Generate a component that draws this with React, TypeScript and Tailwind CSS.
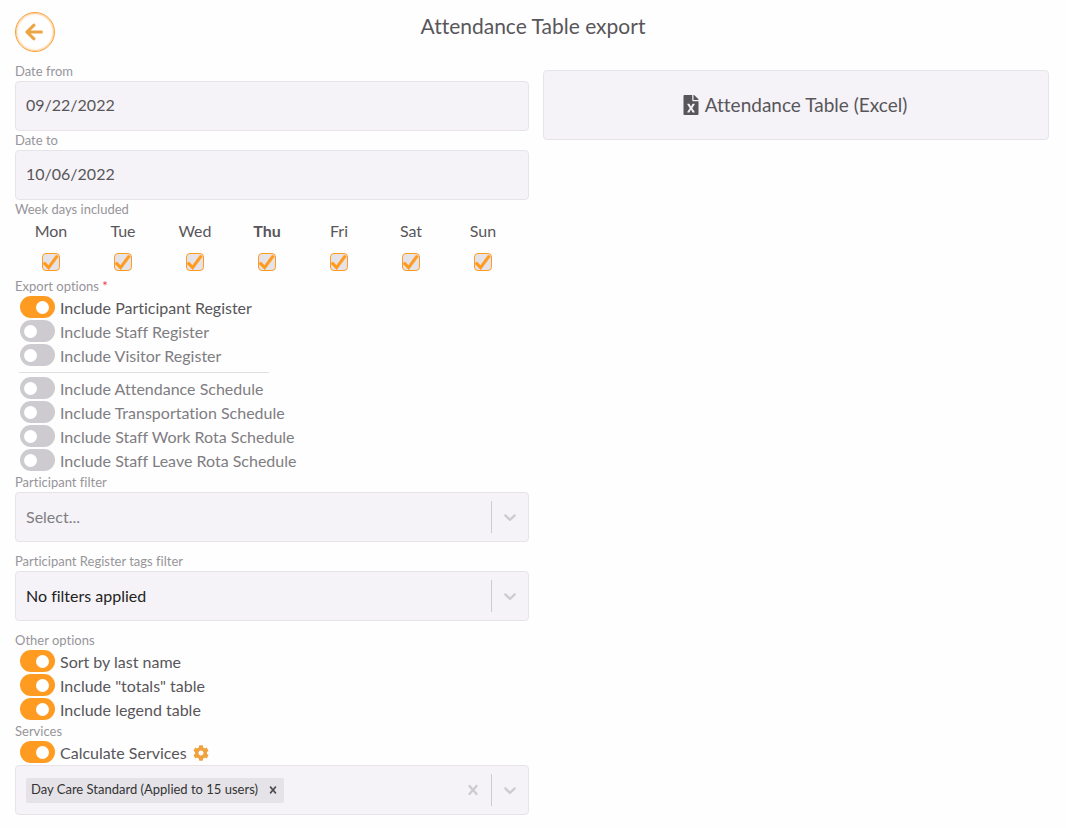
import React, { useState } from 'react';
import { FaArrowLeft, FaCog, FaFileExcel } from 'react-icons/fa';

const DAYS = ['Mon', 'Tue', 'Wed', 'Thu', 'Fri', 'Sat', 'Sun'];
const TODAY = 'Thu';

const REGISTERS = ['Include Participant Register', 'Include Staff Register', 'Include Visitor Register'];
const SCHEDULES = [
  'Include Attendance Schedule',
  'Include Transportation Schedule',
  'Include Staff Work Rota Schedule',
  'Include Staff Leave Rota Schedule',
];
const OTHER = ['Sort by last name', 'Include "totals" table', 'Include legend table'];

const labelClass = "block h-[19px] text-[13px] leading-[18px] text-[#97959a]";
const boxClass = "w-full h-[50px] bg-[#f5f3f7] border border-[#e6e4e8] rounded";

const ChevronDown = () => (
  <svg width="20" height="20" viewBox="0 0 20 20" fill="currentColor" aria-hidden="true">
    <path d="M4.516 7.548c0.436-0.446 1.043-0.481 1.576 0l3.908 3.747 3.908-3.747c0.533-0.481 1.141-0.446 1.574 0 0.436 0.445 0.408 1.197 0 1.615-0.406 0.418-4.695 4.502-4.695 4.502-0.217 0.223-0.502 0.335-0.787 0.335s-0.57-0.112-0.789-0.335c0 0-4.287-4.084-4.695-4.502s-0.436-1.17 0-1.615z" />
  </svg>
);

const Cross = ({ size }: { size: number }) => (
  <svg width={size} height={size} viewBox="0 0 20 20" fill="currentColor" aria-hidden="true">
    <path d="M14.348 14.849c-0.469 0.469-1.229 0.469-1.697 0l-2.651-3.030-2.651 3.029c-0.469 0.469-1.229 0.469-1.697 0-0.469-0.469-0.469-1.229 0-1.697l2.758-3.15-2.759-3.152c-0.469-0.469-0.469-1.228 0-1.697s1.228-0.469 1.697 0l2.652 3.031 2.651-3.031c0.469-0.469 1.228-0.469 1.697 0s0.469 1.229 0 1.697l-2.758 3.152 2.758 3.15c0.469 0.469 0.469 1.229 0 1.698z" />
  </svg>
);

interface DateFieldProps {
  id: string;
  label: string;
  initial: string;
}

const DateField: React.FC<DateFieldProps> = ({ id, label, initial }) => {
  const [value, setValue] = useState(initial);

  return (
    <div>
      <label htmlFor={id} className={labelClass}>{label}</label>
      <input
        id={id}
        type="text"
        value={value}
        onChange={(e) => setValue(e.target.value)}
        className={`${boxClass} block px-[10px] pb-1 text-base text-[#58565a] outline-none`}
      />
    </div>
  );
};

interface ToggleProps {
  label: string;
  initial?: boolean;
  children?: React.ReactNode;
}

const Toggle: React.FC<ToggleProps> = ({ label, initial = false, children }) => {
  const [on, setOn] = useState(initial);

  return (
    <div className="flex h-6 items-start pl-[5px]">
      <label className="flex items-start gap-[5px]">
        <input
          type="checkbox"
          role="switch"
          checked={on}
          onChange={(e) => setOn(e.target.checked)}
          className="flex h-[22px] w-[35px] shrink-0 appearance-none items-center rounded-full bg-[#cdcbcf] px-1 before:block before:size-[13px] before:rounded-full before:bg-white checked:justify-end checked:bg-[#ff9b21] checked:px-[6px]"
        />
        <span className={`text-base leading-6 whitespace-nowrap ${on ? 'text-[#58565a]' : 'text-[#7f7d82]'}`}>{label}</span>
      </label>
      {children}
    </div>
  );
};

interface SelectFieldProps {
  id: string;
  label: string;
  option: string;
  textClass: string;
}

const SelectField: React.FC<SelectFieldProps> = ({ id, label, option, textClass }) => (
  <div className="mb-[10px]">
    <label htmlFor={id} className={labelClass}>{label}</label>
    <div className="relative">
      <select id={id} className={`${boxClass} block appearance-none px-[10px] pr-12 text-base outline-none ${textClass}`}>
        <option>{option}</option>
      </select>
      <span className="pointer-events-none absolute inset-y-px right-px flex items-center text-[#cccccc]">
        <span className="h-8 w-px bg-[#cccccc]" />
        <span className="px-2"><ChevronDown /></span>
      </span>
    </div>
  </div>
);

const DayCheck = ({ day }: { day: string }) => {
  const [checked, setChecked] = useState(true);

  return (
    <label className="flex w-[72px] flex-col items-center text-base text-[#58565a]">
      <span className={`leading-6 ${day === TODAY ? 'font-bold' : ''}`}>{day}</span>
      <span className="relative mt-[10px] block size-[18px]">
        <input
          type="checkbox"
          checked={checked}
          onChange={(e) => setChecked(e.target.checked)}
          className="block size-[18px] appearance-none rounded border border-[#ff9b21] bg-[#e6e3e8]"
        />
        {checked && (
          <svg viewBox="0 0 18 18" className="pointer-events-none absolute inset-0 size-[18px]" aria-hidden="true">
            <path d="M1.8 9.6 L6.6 14.6 L15.4 2.6" fill="none" stroke="#ff9b21" strokeWidth="3.2" />
          </svg>
        )}
      </span>
    </label>
  );
};

const ServicesSelect = () => {
  const [services, setServices] = useState(['Day Care Standard (Applied to 15 users)']);

  return (
    <div className={`${boxClass} flex items-center`}>
      <div className="flex flex-1 gap-1 pl-[10px]">
        {services.map((service) => (
          <span key={service} className="flex h-[25px] items-center rounded-xs bg-[#e5e3e7] text-[13px] text-[#333333]">
            <span className="pl-[5px] pr-1">{service}</span>
            <button
              type="button"
              aria-label={`Remove ${service}`}
              onClick={() => setServices(services.filter((s) => s !== service))}
              className="px-1 text-[#4d4b50]"
            >
              <Cross size={14} />
            </button>
          </span>
        ))}
      </div>
      <button type="button" aria-label="Clear services" onClick={() => setServices([])} className="p-2 text-[#cccccc]">
        <Cross size={20} />
      </button>
      <span className="h-8 w-px bg-[#cccccc]" />
      <button type="button" aria-label="Open services" className="p-2 text-[#cccccc]">
        <ChevronDown />
      </button>
    </div>
  );
};

const App = () => {
  return (
    <div className="min-h-screen bg-[#fefefe] pt-3 pr-[17px] pb-3 pl-[15px] font-['Lato','Open_Sans',sans-serif] [font-variant-ligatures:none]">
      <header className="grid grid-cols-[40px_1fr_38px] items-start">
        <button
          type="button"
          aria-label="Back"
          className="flex size-10 items-center justify-center rounded-full border border-[#f9a03a] bg-white pr-[2px] text-[#eda445] shadow-[inset_0_0_2px_1px_#fbc88a]"
        >
          <FaArrowLeft size={20} />
        </button>
        <h1 className="text-center text-[21px] leading-7 text-[#58565a]">Attendance Table export</h1>
      </header>

      <main className="mt-[10px] grid grid-cols-[514fr_506fr] items-start gap-[14px]">
        <form onSubmit={(e) => e.preventDefault()}>
          <DateField id="date-from" label="Date from" initial="09/22/2022" />
          <DateField id="date-to" label="Date to" initial="10/06/2022" />

          <fieldset>
            <legend className={labelClass}>Week days included</legend>
            <div className="flex pb-[6px]">
              {DAYS.map((day) => <DayCheck key={day} day={day} />)}
            </div>
          </fieldset>

          <fieldset>
            <legend className={labelClass}>Export options <span className="text-[#f0384f]">*</span></legend>
            {REGISTERS.map((name, i) => <Toggle key={name} label={name} initial={i === 0} />)}
            <hr className="my-1 ml-1 w-[250px] border-[#e0dee2]" />
            {SCHEDULES.map((name) => <Toggle key={name} label={name} />)}
          </fieldset>

          <SelectField id="participant-filter" label="Participant filter" option="Select..." textClass="text-[#807e83]" />
          <SelectField id="tags-filter" label="Participant Register tags filter" option="No filters applied" textClass="text-[#222222]" />

          <fieldset>
            <legend className={labelClass}>Other options</legend>
            {OTHER.map((name) => <Toggle key={name} label={name} initial />)}
          </fieldset>

          <fieldset>
            <legend className={labelClass}>Services</legend>
            <Toggle label="Calculate Services" initial>
              <button type="button" aria-label="Service settings" className="flex h-6 items-center pl-[6px] text-[#f0a23e]">
                <FaCog size={16} />
              </button>
            </Toggle>
            <ServicesSelect />
          </fieldset>
        </form>

        <button
          type="button"
          className="mt-2 flex h-[70px] w-full items-center justify-center gap-1 rounded border border-[#e6e4e8] bg-[#f5f3f7] pr-1 text-[19px] text-[#58565a]"
        >
          <FaFileExcel size={20} />
          Attendance Table (Excel)
        </button>
      </main>
    </div>
  );
};

export default App;
